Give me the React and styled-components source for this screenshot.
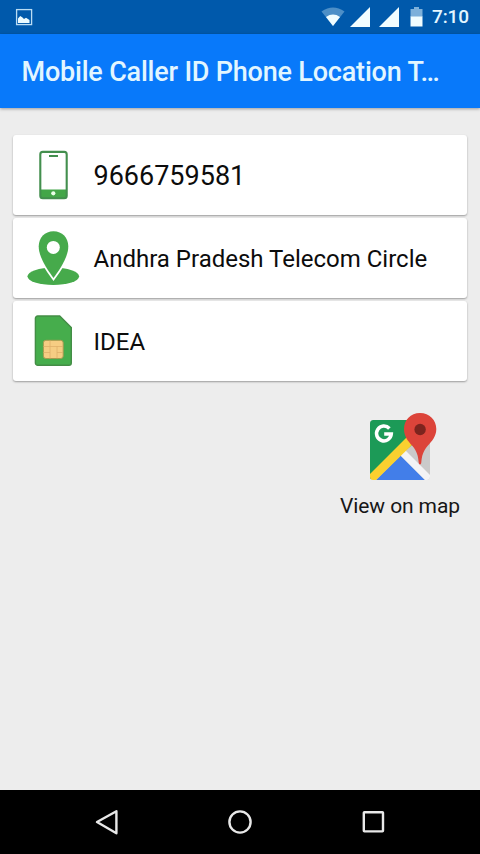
import React from 'react';
import styled, { createGlobalStyle } from 'styled-components';

const GlobalStyle = createGlobalStyle`
  * {
    box-sizing: border-box;
  }

  body {
    margin: 0;
    background: #ededed;
    font-family: Roboto, sans-serif;
  }
`;

const Screen = styled.div`
  display: flex;
  flex-direction: column;
  width: 480px;
  height: 854px;
  overflow: hidden;
  background: #ededed;
`;

const StatusBar = styled.div`
  display: flex;
  justify-content: space-between;
  flex: none;
  height: 34px;
  padding: 0 10px 0 15px;
  background: #0059ab;
`;

const StatusGroup = styled.div`
  display: flex;
  align-items: center;
  gap: ${props => props.gap || 0}px;
`;

const Clock = styled.span`
  width: 38px;
  margin-left: -2px;
  color: #e4f6ff;
  font-size: 19px;
  font-weight: 500;
  line-height: 34px;
  letter-spacing: -0.1px;
  white-space: nowrap;
`;

const AppBar = styled.header`
  flex: none;
  height: 74px;
  padding: 0 38px 0 21.5px;
  background: #0879fa;
  box-shadow: 0 1px 3px rgba(0, 0, 0, 0.35);
`;

const Title = styled.h1`
  margin: 0;
  color: #e2f6ff;
  font-size: 27px;
  font-weight: 500;
  line-height: 76px;
  letter-spacing: -0.2px;
  white-space: nowrap;
`;

const Content = styled.main`
  display: flex;
  flex: 1;
  flex-direction: column;
  padding: 27px 13px 0;
`;

const CardList = styled.div`
  display: flex;
  flex-direction: column;
  gap: 3px;
`;

const InfoCard = styled.div`
  display: flex;
  align-items: center;
  height: 80px;
  padding-left: 12px;
  border-radius: 3px;
  background: #fff;
  box-shadow: 0 1px 2px rgba(0, 0, 0, 0.35);
`;

const CardText = styled.span`
  margin-left: 12.5px;
  padding-top: 2px;
  color: #0c0c0c;
  font-size: ${props => props.size}px;
  line-height: 32px;
  white-space: nowrap;
`;

const MapButton = styled.button`
  display: flex;
  flex-direction: column;
  align-items: center;
  align-self: flex-end;
  width: 120px;
  margin: 31px 7px 0 0;
  padding: 0;
  border: none;
  background: none;
  color: #161616;
  font-family: inherit;
  font-size: 21px;
  line-height: 28px;
  letter-spacing: -0.1px;
  white-space: nowrap;
`;

const MapLabel = styled.span`
  margin-top: 10px;
`;

const NavBar = styled.nav`
  display: flex;
  align-items: center;
  justify-content: space-between;
  flex: none;
  height: 64px;
  padding: 0 93px;
  background: #000;
`;

const Icon = styled.svg`
  display: block;
  flex: none;
`;

const PictureIcon = () => (
  <Icon width="18" height="18" viewBox="0 0 18 18">
    <rect x="1.6" y="1.6" width="15" height="15" fill="none" stroke="#b9dcf3" strokeWidth="1.3" />
    <path d="M3 15V10.5L5.2 8l2 1.3L9 11l2-1.3L14.5 12v3z" fill="#eafaff" />
  </Icon>
);

const WifiIcon = () => (
  <Icon width="24" height="20" viewBox="0 0 24 20">
    <path d="M0.5 4.6Q12-3.6 23.5 4.6L12 19z" fill="#4d8fc7" />
    <path d="M5 10Q12 5.2 19 10L12 19z" fill="#f1fdff" />
  </Icon>
);

const SignalIcon = () => (
  <Icon width="20" height="20" viewBox="0 0 20 20">
    <path d="M20 0V20H0z" fill="#f1fdff" />
  </Icon>
);

const BatteryIcon = () => (
  <Icon width="13" height="20" viewBox="0 0 13 20">
    <path d="M4 0h5v2h3.5v8H.5V2H4z" fill="#7db0da" />
    <path d="M.5 9.5h12V19.5H.5z" fill="#f1fdff" />
  </Icon>
);

const PhoneIcon = () => (
  <Icon width="56" height="56" viewBox="0 0 56 56">
    <rect x="15.3" y="4.9" width="26.4" height="46.4" rx="2.5" fill="#fff" />
    <path d="M15.3 42.5h26.4V49a2.5 2.5 0 0 1-2.5 2.3H17.8A2.5 2.5 0 0 1 15.3 49z" fill="#43a648" />
    <rect x="15.3" y="4.9" width="26.4" height="46.4" rx="2.5" fill="none" stroke="#438f4e" strokeWidth="2.1" />
    <path d="M24 9h9" stroke="#438f4e" strokeWidth="2" />
    <circle cx="28.3" cy="46.3" r="2.1" fill="#e9ffe8" />
  </Icon>
);

const LocationIcon = () => (
  <Icon width="56" height="56" viewBox="0 0 56 56">
    <ellipse cx="28.3" cy="46.3" rx="25.8" ry="8.7" fill="#46aa4b" />
    <path
      d="M28.5 1.3C19.8 1.3 13.7 7.8 13.7 16.5C13.7 27 22.5 40 28.5 48C34.5 40 43.3 27 43.3 16.5C43.3 7.8 37.2 1.3 28.5 1.3z"
      fill="#46aa4b"
      stroke="#fff"
      strokeWidth="3.6"
      paintOrder="stroke"
    />
    <circle cx="28.3" cy="17.4" r="6.5" fill="#fff" />
  </Icon>
);

const SimIcon = () => (
  <Icon width="56" height="56" viewBox="0 0 56 56">
    <path
      d="M12.7 3h22l11.6 11.5V50a2.3 2.3 0 0 1-2.3 2.3H12.7A2.3 2.3 0 0 1 10.4 50V5.3A2.3 2.3 0 0 1 12.7 3z"
      fill="#46ad4c"
      stroke="#448d46"
      strokeWidth="1.4"
    />
    <rect x="18.4" y="27.3" width="19.8" height="18.2" rx="2.5" fill="#f6cd83" stroke="#a59b50" />
    <path
      d="M18.5 33.5h6.5M18.5 39.5h6.5M32 33.5h6M32 39.5h6M25 27.5v18M32 33v12.3M25 33.5h7"
      fill="none"
      stroke="#dfb06a"
      strokeWidth="0.8"
    />
  </Icon>
);

const MapsIcon = () => (
  <Icon width="74" height="70" viewBox="0 0 74 70">
    <defs>
      <clipPath id="mapTile">
        <rect x="7" y="8" width="60" height="60" rx="3.5" />
      </clipPath>
    </defs>
    <g clipPath="url(#mapTile)">
      <path d="M7 8h60v60H7z" fill="#cacaca" />
      <path d="M7 8h48v20L7 68z" fill="#1c9a57" />
      <path d="M9 72L37.5 43.5L66 72z" fill="#427ee9" />
      <path d="M37.5 43.5L42.5 38.5L72 68L67 73z" fill="#f3f3f5" />
      <path d="M3 66L48 21L54 28L8 73z" fill="#fad02f" />
    </g>
    <path d="M26.4 16.5A7.4 7.4 0 1 0 28.3 22H21.2" fill="none" stroke="#fff" strokeWidth="3.5" />
    <path
      d="M57 1C47.5 1 41 8 41 17C41 24.5 45 29 49.5 34C54 39.5 55.2 44 55.7 50.5C56 53 58 53 58.3 50.5C58.8 44 60 39.5 64.5 34C69 29 73.3 24.5 73.3 17C73.3 8 66.5 1 57 1z"
      fill="#dc443a"
    />
    <circle cx="57.1" cy="17.5" r="5.7" fill="#7c241e" />
  </Icon>
);

const BackIcon = () => (
  <Icon width="26" height="28" viewBox="0 0 26 28">
    <path d="M23.4 3.2V25.2L4 14z" fill="none" stroke="#e8e8e8" strokeWidth="2.4" strokeLinejoin="round" />
  </Icon>
);

const HomeIcon = () => (
  <Icon width="26" height="26" viewBox="0 0 26 26">
    <circle cx="13" cy="13" r="10.6" fill="none" stroke="#e8e8e8" strokeWidth="2.4" />
  </Icon>
);

const RecentsIcon = () => (
  <Icon width="26" height="26" viewBox="0 0 26 26">
    <rect x="2.8" y="3.2" width="19.2" height="19.2" rx="0.6" fill="none" stroke="#e8e8e8" strokeWidth="2.4" />
  </Icon>
);

const App = () => {
  return (
    <Screen>
      <GlobalStyle />
      <StatusBar>
        <StatusGroup>
          <PictureIcon />
        </StatusGroup>
        <StatusGroup gap={11}>
          <StatusGroup gap={5}>
            <WifiIcon />
            <StatusGroup gap={9}>
              <SignalIcon />
              <SignalIcon />
            </StatusGroup>
          </StatusGroup>
          <BatteryIcon />
          <Clock>7:10</Clock>
        </StatusGroup>
      </StatusBar>
      <AppBar>
        <Title>Mobile Caller ID Phone Location T…</Title>
      </AppBar>
      <Content>
        <CardList>
          <InfoCard>
            <PhoneIcon />
            <CardText size={27}>9666759581</CardText>
          </InfoCard>
          <InfoCard>
            <LocationIcon />
            <CardText size={24}>Andhra Pradesh Telecom Circle</CardText>
          </InfoCard>
          <InfoCard>
            <SimIcon />
            <CardText size={24}>IDEA</CardText>
          </InfoCard>
        </CardList>
        <MapButton>
          <MapsIcon />
          <MapLabel>View on map</MapLabel>
        </MapButton>
      </Content>
      <NavBar>
        <BackIcon />
        <HomeIcon />
        <RecentsIcon />
      </NavBar>
    </Screen>
  );
};

export default App;
